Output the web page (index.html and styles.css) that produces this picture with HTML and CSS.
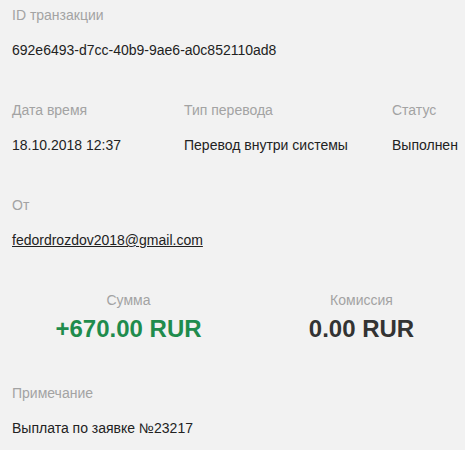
FILE: index.html
```html
<!DOCTYPE html>
<html lang="ru">
<head>
    <meta charset="UTF-8">
    <meta name="viewport" content="width=device-width, initial-scale=1.0">
    <title>Детали транзакции</title>
    <link rel="stylesheet" href="styles.css">
</head>
<body>
    <div class="details">
        <div class="section">
            <div class="label">ID транзакции</div>
            <div class="value">692e6493-d7cc-40b9-9ae6-a0c852110ad8</div>
        </div>
        <div class="section row">
            <div class="cell">
                <div class="label">Дата время</div>
                <div class="value">18.10.2018 12:37</div>
            </div>
            <div class="cell">
                <div class="label">Тип перевода</div>
                <div class="value">Перевод внутри системы</div>
            </div>
            <div class="cell">
                <div class="label">Статус</div>
                <div class="value">Выполнен</div>
            </div>
        </div>
        <div class="section">
            <div class="label">От</div>
            <div class="value"><a class="link" href="#">fedordrozdov2018@gmail.com</a></div>
        </div>
        <div class="section sums">
            <div class="sum">
                <div class="label">Сумма</div>
                <div class="amount plus">+670.00 RUR</div>
            </div>
            <div class="sum">
                <div class="label">Комиссия</div>
                <div class="amount">0.00 RUR</div>
            </div>
        </div>
        <div class="section">
            <div class="label">Примечание</div>
            <div class="value">Выплата по заявке №23217</div>
        </div>
    </div>
</body>
</html>
```

FILE: styles.css
```css
body {
    font-family: 'Liberation Sans', Arial, sans-serif;
    font-size: 14px;
    background: #f2f2f2;
    margin: 0;
    padding: 0;
    overflow: hidden;
}
.details {
    padding: 5px 12px 0;
}
.section {
    margin-bottom: 40px;
}
.section:last-child {
    margin-bottom: 0;
}
.label {
    line-height: 20px;
    color: #a3a3a3;
}
.value {
    margin-top: 15px;
    line-height: 20px;
    color: #222;
}
.link {
    color: #222;
    text-decoration: underline;
}
.row {
    display: grid;
    grid-template-columns: 172px 208px auto;
}
.sums {
    display: grid;
    grid-template-columns: 233px 233px;
    margin-bottom: 39px;
}
.sum {
    text-align: center;
}
.amount {
    margin-top: 4px;
    line-height: 30px;
    font-size: 24px;
    font-weight: bold;
    color: #333;
}
.amount.plus {
    color: #1f8c4d;
}
```
